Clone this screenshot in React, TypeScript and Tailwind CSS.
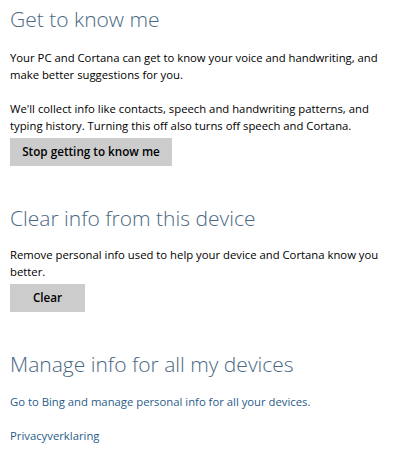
export default function App() {
  return (
    <main className="w-[420px] h-[465px] bg-white px-[10px] pt-[5px] text-black font-['Open_Sans',_'Noto_Sans',_sans-serif]">
      {/* Get to know me */}
      <section>
        <h1 className="text-[21px] leading-[28px] font-light text-[#4a6883]">Get to know me</h1>
        <p className="mt-[16px] text-[11.3px] leading-[17px] whitespace-nowrap">
          Your PC and Cortana can get to know your voice and handwriting, and
          <br />
          make better suggestions for you.
        </p>
        <p className="mt-[17px] text-[11.3px] leading-[17px] whitespace-nowrap">
          We'll collect info like contacts, speech and handwriting patterns, and
          <br />
          typing history. Turning this off also turns off speech and Cortana.
        </p>
        <button className="mt-[4px] w-[162px] h-[28px] bg-[#cccccc] text-[11.7px] font-semibold">
          Stop getting to know me
        </button>
      </section>

      {/* Clear info */}
      <section>
        <h2 className="mt-[38px] text-[21px] leading-[28px] font-light text-[#4a6883]">Clear info from this device</h2>
        <p className="mt-[14px] text-[11.3px] leading-[17px] whitespace-nowrap">
          Remove personal info used to help your device and Cortana know you
          <br />
          better.
        </p>
        <button className="mt-[4px] w-[75px] h-[28px] bg-[#cccccc] text-[11.7px] font-semibold">Clear</button>
      </section>

      {/* Manage info */}
      <section>
        <h2 className="mt-[38px] text-[21px] leading-[28px] font-light text-[#4a6883]">Manage info for all my devices</h2>
        <a className="block mt-[15px] text-[11.3px] leading-[17px] text-[#2a5c8a]">
          Go to Bing and manage personal info for all your devices.
        </a>
        <a className="block mt-[17px] text-[11.3px] leading-[17px] text-[#2a5c8a]">Privacyverklaring</a>
      </section>
    </main>
  );
}
